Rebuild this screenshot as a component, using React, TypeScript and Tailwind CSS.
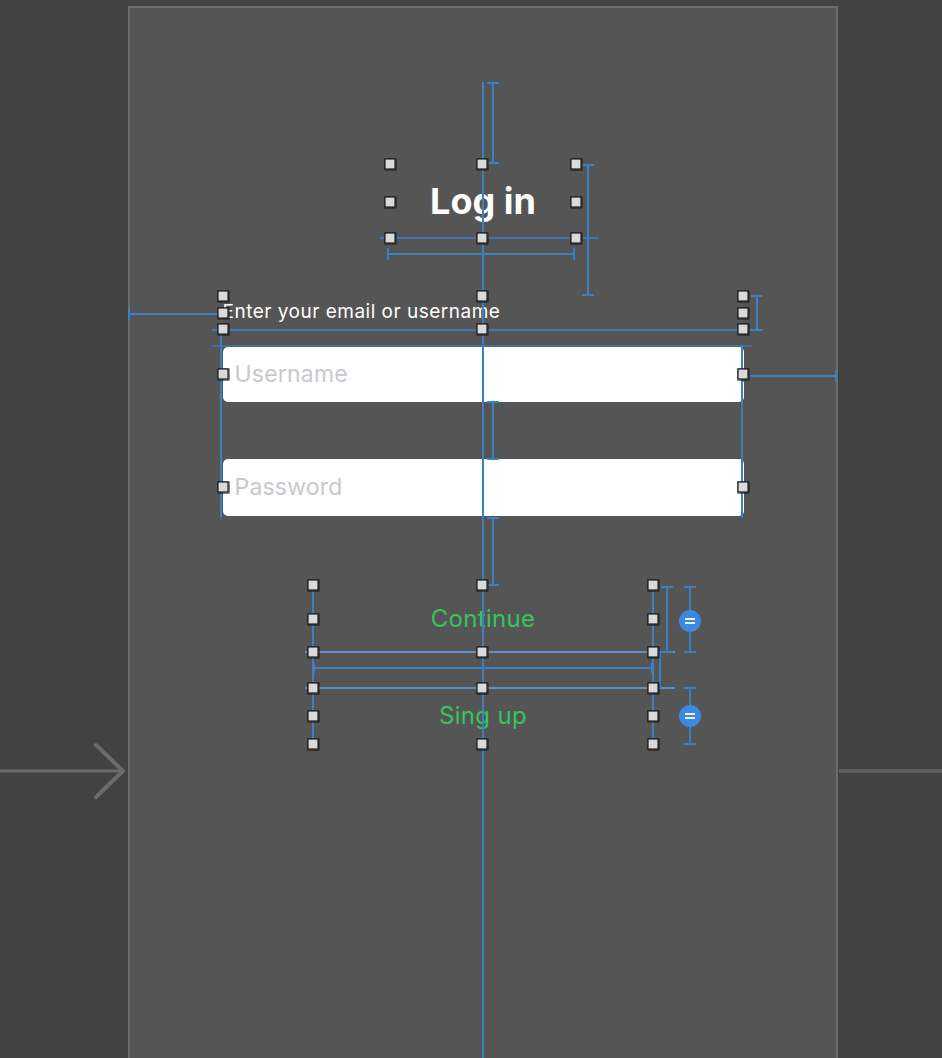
import React from "react";

const BLUE = "#3c7fc3";

function IBeamV({ x, y1, y2, w = 6 }: { x: number; y1: number; y2: number; w?: number }) {
  return (
    <g stroke={BLUE} strokeWidth={2}>
      <line x1={x} y1={y1} x2={x} y2={y2} />
      <line x1={x - w} y1={y1} x2={x + w} y2={y1} />
      <line x1={x - w} y1={y2} x2={x + w} y2={y2} />
    </g>
  );
}

function IBeamH({ y, x1, x2, h = 6 }: { y: number; x1: number; x2: number; h?: number }) {
  return (
    <g stroke={BLUE} strokeWidth={2}>
      <line x1={x1} y1={y} x2={x2} y2={y} />
      <line x1={x1} y1={y - h} x2={x1} y2={y + h} />
      <line x1={x2} y1={y - h} x2={x2} y2={y + h} />
    </g>
  );
}

function Handle({ x, y }: { x: number; y: number }) {
  return (
    <g>
      <rect x={x - 6} y={y - 6} width={13} height={13} rx={1.5} fill="#1c1c1c" opacity={0.55} />
      <rect x={x - 5} y={y - 5} width={10} height={10} fill="#dadada" stroke="#222" strokeWidth={1.2} />
    </g>
  );
}

function EqBadge({ x, y }: { x: number; y: number }) {
  return (
    <g>
      <circle cx={x} cy={y} r={11} fill="#3d88e0" />
      <line x1={x - 5} y1={y - 2} x2={x + 5} y2={y - 2} stroke="#e8eefa" strokeWidth={2} />
      <line x1={x - 5} y1={y + 2} x2={x + 5} y2={y + 2} stroke="#e8eefa" strokeWidth={2} />
    </g>
  );
}

const handles: [number, number][] = [
  [390, 164], [482, 164], [576, 164], [390, 202], [576, 202], [390, 238], [482, 238], [576, 238],
  [223, 296], [482, 296], [743, 296], [223, 313], [743, 313], [223, 329], [482, 329], [743, 329],
  [223, 374], [743, 374], [223, 487], [743, 487],
  [313, 585], [482, 585], [653, 585], [313, 619], [653, 619], [313, 652], [482, 652], [653, 652],
  [313, 688], [482, 688], [653, 688], [313, 716], [653, 716], [313, 744], [482, 744], [653, 744],
];

export default function App() {
  const font = { fontFamily: "Inter, 'Open Sans', 'Liberation Sans', sans-serif" };
  return (
    <div className="relative w-[942px] h-[1058px] overflow-hidden bg-[#424242] pt-[6px] pl-[128px]" style={font}>
      <div className="w-[710px] h-[1100px] border-2 border-[#6c6c6c] bg-[#555555] flex flex-col items-center">
        <div className="mt-[156px] w-[186px] h-[74px] flex items-center justify-center text-white text-[36px] font-bold">
          Log in
        </div>
        <div className="mt-[58px] w-[521px] h-[33px] flex items-center text-white text-[19px] tracking-[0.5px]">
          Enter your email or username
        </div>
        <div className="mt-[18px] w-[521px] h-[55px] rounded-[5px] bg-white flex items-center pl-[12px] text-[23px] tracking-[0.2px] text-[#c8c8cc]">
          Username
        </div>
        <div className="mt-[57px] w-[521px] h-[57px] rounded-[5px] bg-white flex items-center pl-[12px] text-[23px] tracking-[0.2px] text-[#c8c8cc]">
          Password
        </div>
        <div className="mt-[69px] w-[340px] h-[67px] flex items-center justify-center text-[24px] tracking-[0.3px] text-[#34c759]">
          Continue
        </div>
        <div className="mt-[36px] w-[340px] h-[56px] flex items-center justify-center text-[24px] tracking-[0.3px] text-[#34c759]">
          Sing up
        </div>
      </div>

      <svg className="absolute inset-0 pointer-events-none" width={942} height={1058} viewBox="0 0 942 1058">
        <line x1={0} y1={771} x2={124} y2={771} stroke="#6b6b6b" strokeWidth={3} />
        <polyline points="96,745 123,771 96,797" fill="none" stroke="#6b6b6b" strokeWidth={4} strokeLinecap="round" strokeLinejoin="round" />
        <line x1={839} y1={771} x2={942} y2={771} stroke="#5e5e5e" strokeWidth={4} />

        <line x1={483} y1={82} x2={483} y2={1058} stroke={BLUE} strokeWidth={2} />

        <IBeamV x={493} y1={83} y2={163} />
        <IBeamV x={588} y1={165} y2={295} />
        <line x1={380} y1={238} x2={599} y2={238} stroke={BLUE} strokeWidth={2} opacity={0.8} />
        <IBeamH y={254} x1={388} x2={574} />

        <IBeamH y={314} x1={129} x2={222} />
        <line x1={212} y1={330} x2={752} y2={330} stroke={BLUE} strokeWidth={2} opacity={0.85} />
        <line x1={212} y1={346} x2={752} y2={346} stroke={BLUE} strokeWidth={2} opacity={0.6} />
        <IBeamV x={757} y1={296} y2={330} />

        <line x1={221} y1={330} x2={221} y2={518} stroke={BLUE} strokeWidth={2} />
        <line x1={742} y1={345} x2={742} y2={518} stroke={BLUE} strokeWidth={2} />
        <IBeamH y={376} x1={743} x2={836} />
        <IBeamV x={493} y1={402} y2={459} />
        <IBeamV x={493} y1={518} y2={585} />

        <line x1={313} y1={585} x2={313} y2={745} stroke={BLUE} strokeWidth={2} />
        <line x1={653} y1={585} x2={653} y2={745} stroke={BLUE} strokeWidth={2} />
        <line x1={305} y1={652} x2={675} y2={652} stroke="#5a8fca" strokeWidth={2} />
        <line x1={305} y1={688} x2={675} y2={688} stroke="#5a8fca" strokeWidth={2} />
        <IBeamH y={668} x1={314} x2={652} h={5} />
        <line x1={660} y1={652} x2={660} y2={688} stroke={BLUE} strokeWidth={2} />
        <IBeamV x={667} y1={587} y2={652} />
        <IBeamV x={690} y1={587} y2={652} />
        <EqBadge x={690} y={621} />
        <IBeamV x={690} y1={688} y2={744} />
        <EqBadge x={690} y={716} />

        {handles.map(([x, y], i) => (
          <Handle key={i} x={x} y={y} />
        ))}
      </svg>
    </div>
  );
}
